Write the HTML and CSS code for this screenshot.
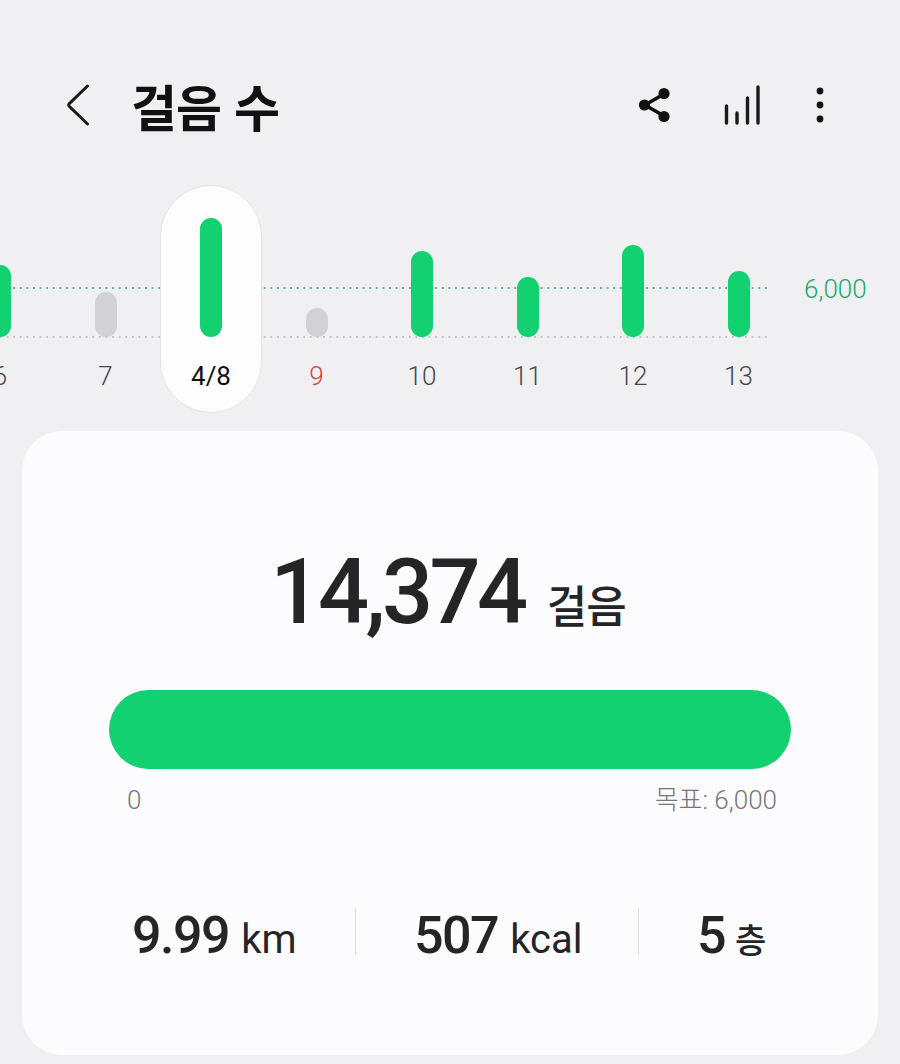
FILE: index.html
```html
<!DOCTYPE html>
<html lang="ko">
<head>
<meta charset="utf-8">
<title>걸음 수</title>
<link rel="stylesheet" href="styles.css">
</head>
<body>
<header class="top">
  <svg class="back" width="24" height="42" viewBox="0 0 24 42"><path d="M21.5 2 L3 20 Q2.4 21 3 22 L21.5 40" fill="none" stroke="#1a1a1c" stroke-width="3" stroke-linecap="round"/></svg>
  <h1 class="title">걸음 수</h1>
  <div class="actions">
    <svg class="ic-share" width="34" height="36" viewBox="0 0 34 36"><path d="M26 7 L7 18 L26 29" fill="none" stroke="#111" stroke-width="3.6"/><circle cx="26" cy="6.5" r="5.6" fill="#111"/><circle cx="6.5" cy="18" r="5.6" fill="#111"/><circle cx="26" cy="29.5" r="5.6" fill="#111"/></svg>
    <svg class="ic-bars" width="36" height="40" viewBox="0 0 36 40"><g stroke="#1a1a1c" stroke-width="3.4" stroke-linecap="round"><path d="M2.5 21V38"/><path d="M13 28V38"/><path d="M23.5 13V38"/><path d="M34 2V38"/></g></svg>
    <svg class="ic-more" width="10" height="36" viewBox="0 0 10 36"><circle cx="5" cy="4" r="3.4" fill="#111"/><circle cx="5" cy="18" r="3.4" fill="#111"/><circle cx="5" cy="32" r="3.4" fill="#111"/></svg>
  </div>
</header>

<section class="chart">
  <div class="line line-goal"></div>
  <div class="line line-base"></div>
  <div class="goal-label">6,000</div>
  <div class="cols">
    <div class="col"><div class="plot"><i class="bar" style="height:72px"></i></div><span class="day">6</span></div>
    <div class="col"><div class="plot"><i class="bar bar-low" style="height:45px"></i></div><span class="day">7</span></div>
    <div class="col col-sel"><div class="plot"><i class="bar" style="height:119px"></i></div><span class="day">4/8</span></div>
    <div class="col"><div class="plot"><i class="bar bar-low" style="height:29px"></i></div><span class="day day-red">9</span></div>
    <div class="col"><div class="plot"><i class="bar" style="height:86px"></i></div><span class="day">10</span></div>
    <div class="col"><div class="plot"><i class="bar" style="height:60px"></i></div><span class="day">11</span></div>
    <div class="col"><div class="plot"><i class="bar" style="height:92px"></i></div><span class="day">12</span></div>
    <div class="col"><div class="plot"><i class="bar" style="height:66px"></i></div><span class="day">13</span></div>
  </div>
</section>

<main class="card">
  <div class="total"><span class="total-num">14,374</span><span class="total-unit">걸음</span></div>
  <div class="progress"></div>
  <div class="scale"><span>0</span><span>목표: 6,000</span></div>
  <div class="stats">
    <div class="stat stat-a"><b>9.99</b><span>km</span></div>
    <div class="stat stat-b"><b>507</b><span>kcal</span></div>
    <div class="stat stat-c"><b>5</b><span>층</span></div>
  </div>
</main>
</body>
</html>
```

FILE: styles.css
```css
* { box-sizing: border-box; }
html, body { margin: 0; padding: 0; }
body {
  width: 900px;
  height: 1064px;
  overflow: hidden;
  background: #f0f0f2;
  font-family: Roboto, "Noto Sans CJK KR", sans-serif;
  color: #252528;
}
.top {
  display: flex;
  align-items: center;
  height: 185px;
  padding: 25px 0 0 66px;
}
.back { flex: none; }
.title {
  margin: 0 0 0 41px;
  font: 700 50px/60px "Noto Sans CJK KR", sans-serif;
  color: #111;
  letter-spacing: -1px;
}
.actions {
  margin-left: auto;
  display: flex;
  align-items: center;
  padding-right: 75px;
}
.ic-share { margin-right: -2px; }
.ic-bars { margin-left: 54px; }
.ic-more { margin-left: 55px; }

.chart {
  position: relative;
  height: 228px;
}
.line {
  position: absolute;
  left: 0;
  width: 771px;
  height: 2px;
  background-size: 6.6px 2px;
  background-repeat: repeat-x;
}
.line-goal {
  top: 102px;
  background-image: radial-gradient(circle at 1px 1px, #52b98c 0.9px, transparent 1.1px);
}
.line-base {
  top: 151px;
  background-image: radial-gradient(circle at 1px 1px, #c4c4c6 0.9px, transparent 1.1px);
}
.goal-label {
  position: absolute;
  left: 804px;
  top: 90px;
  font-size: 26px;
  font-weight: 300;
  line-height: 28px;
  color: #1fa869;
}
.cols {
  position: relative;
  display: flex;
  margin-left: -52.75px;
}
.col {
  flex: none;
  width: 105.5px;
  height: 228px;
  display: flex;
  flex-direction: column;
  align-items: center;
}
.col-sel {
  width: 102px;
  margin: 0 1.75px;
  background: #fdfdfe;
  border: 1px solid #e3e3e6;
  border-radius: 51px;
}
.plot {
  flex: none;
  height: 152px;
  display: flex;
  align-items: flex-end;
}
.col-sel .plot { height: 151px; }
.bar {
  display: block;
  width: 22px;
  background: #13d070;
  border-radius: 11px;
}
.bar-low { background: #d2d2d4; }
.day {
  margin-top: 25px;
  font-size: 26px;
  font-weight: 300;
  line-height: 28px;
  color: #46464a;
}
.col-sel .day { color: #111; font-weight: 400; }
.day-red { color: #d0453c; }

.card {
  margin: 18px 22px 0;
  height: 624px;
  background: #fcfcfe;
  border-radius: 40px;
  padding: 112px 87px 0;
}
.total {
  display: flex;
  justify-content: center;
  align-items: baseline;
  gap: 22px;
  height: 100px;
  padding-right: 4px;
}
.total-num {
  font-size: 90px;
  line-height: 100px;
  font-weight: 500;
  letter-spacing: -3.6px;
}
.total-unit {
  font: 500 44px/60px "Noto Sans CJK KR", sans-serif;
  letter-spacing: -1px;
}
.progress {
  margin-top: 47px;
  height: 79px;
  background: #13d070;
  border-radius: 40px;
}
.scale {
  display: flex;
  justify-content: space-between;
  padding: 16px 14px 0 18px;
  font-size: 26px;
  font-weight: 300;
  line-height: 30px;
  color: #77777b;
}
.stats {
  display: flex;
  margin-top: 93px;
  padding-left: 23px;
}
.stat {
  display: flex;
  align-items: flex-start;
  height: 47px;
  gap: 12px;
}
.stat b {
  font-size: 52px;
  font-weight: 500;
  line-height: 56px;
  letter-spacing: -1.5px;
}
.stat span {
  font-size: 40px;
  font-weight: 400;
  line-height: 64px;
}
.stat-a { width: 224px; border-right: 1px solid #dedee0; }
.stat-b { width: 283px; padding-left: 58px; border-right: 1px solid #dedee0; }
.stat-c { padding-left: 58px; gap: 10px; }
.stat-c span { font-size: 34px; font-weight: 500; line-height: 66px; }
```
